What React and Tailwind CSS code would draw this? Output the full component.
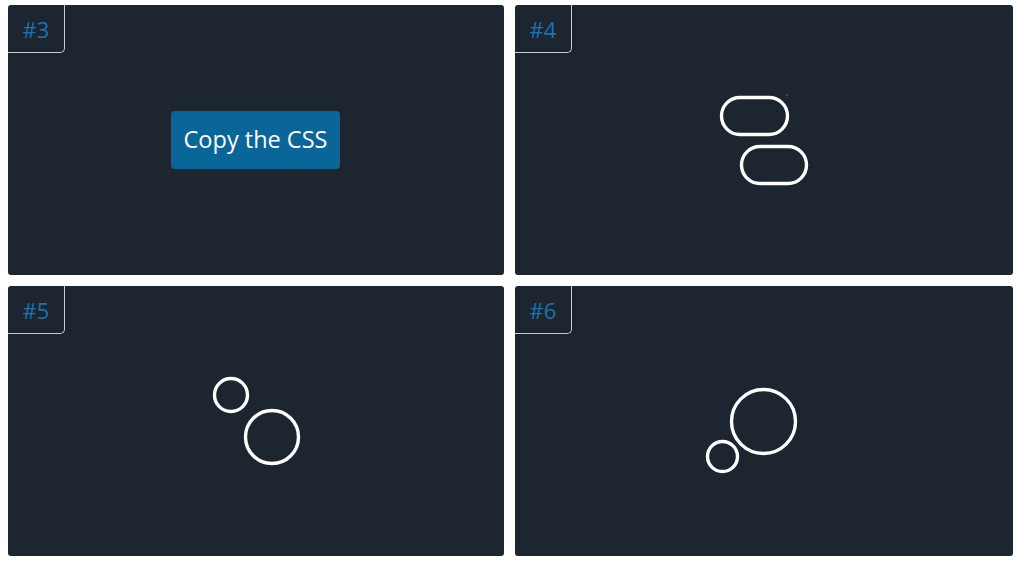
import React from "react";

function Label({ n }) {
  return (
    <div className="absolute left-0 top-0 w-[57px] h-[48px] border-r-[1.5px] border-b-[1.5px] border-[#c9cdd3] rounded-br-[5px] flex items-center justify-center">
      <span className="text-[22px] font-medium text-[#1b72b0] leading-none" style={{ fontFamily: '"Open Sans", sans-serif' }}>#{n}</span>
    </div>
  );
}

function Card({ n, children }) {
  return (
    <div className="relative bg-[#1d2530] rounded-[3px] overflow-hidden h-[270px]">
      <Label n={n} />
      {children}
    </div>
  );
}

export default function App() {
  return (
    <div className="w-[1024px] h-[564px] bg-white pt-[5px] pl-[8px] pr-[11px] pb-[8px]">
      <div className="grid grid-cols-[496px_498px] gap-x-[11px] gap-y-[11px]">
        <Card n={3}>
          <div className="absolute left-[163px] top-[106px] w-[169px] h-[58px] bg-[#0a6698] rounded-[4px] flex items-center justify-center">
            <span className="text-white text-[23.5px] leading-none" style={{ fontFamily: '"Open Sans", sans-serif' }}>Copy the CSS</span>
          </div>
        </Card>
        <Card n={4}>
          <svg className="absolute left-0 top-0" width="498" height="270">
            <rect x="206.5" y="92.5" width="66" height="37" rx="18.5" fill="none" stroke="white" strokeWidth="3.4" />
            <rect x="226.5" y="141.5" width="65" height="37" rx="18.5" fill="none" stroke="white" strokeWidth="3.4" />
            <circle cx="272" cy="90" r="0.8" fill="#6b7480" />
          </svg>
        </Card>
        <Card n={5}>
          <svg className="absolute left-0 top-0" width="496" height="270">
            <circle cx="223" cy="109" r="16.5" fill="none" stroke="white" strokeWidth="3.4" />
            <circle cx="264" cy="151" r="26.5" fill="none" stroke="white" strokeWidth="3.4" />
          </svg>
        </Card>
        <Card n={6}>
          <svg className="absolute left-0 top-0" width="498" height="270">
            <circle cx="248.5" cy="135.5" r="32" fill="none" stroke="white" strokeWidth="3.4" />
            <circle cx="207.5" cy="170.5" r="15" fill="none" stroke="white" strokeWidth="3.4" />
          </svg>
        </Card>
      </div>
    </div>
  );
}
